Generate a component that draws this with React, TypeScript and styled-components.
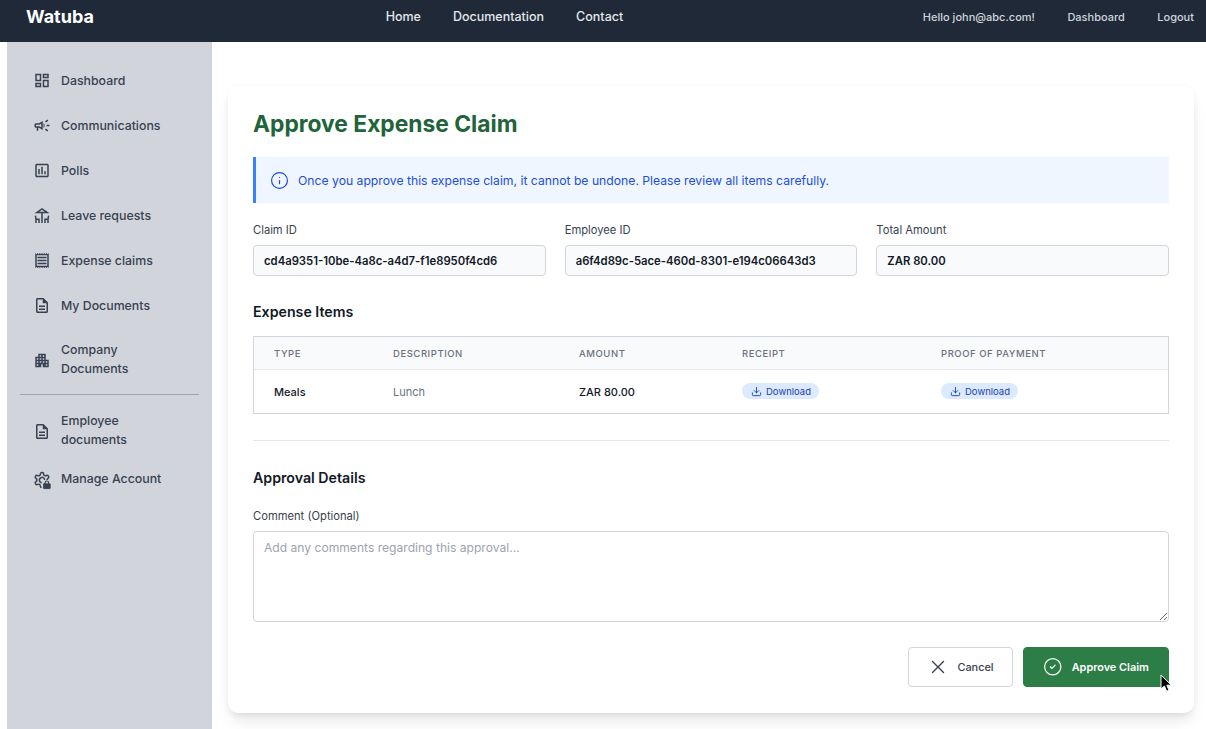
import React from "react";
import styled, { createGlobalStyle } from "styled-components";
import { CircleCheck, Download, Info, X } from "lucide-react";
import {
  MdOutlineApartment,
  MdOutlineCampaign,
  MdOutlineDashboard,
  MdOutlineDeck,
  MdOutlineDescription,
  MdOutlinePoll,
  MdOutlineReceipt,
} from "react-icons/md";

const GlobalStyle = createGlobalStyle`
  html, body {
    margin: 0;
    padding: 0;
    height: 100%;
    background: #fff;
    font-family: Inter, "Liberation Sans", sans-serif;
    color: #111827;
    overflow: hidden;
  }
  * { box-sizing: border-box; }
`;

const Page = styled.div`
  position: relative;
  width: 1206px;
  height: 729px;
  overflow: hidden;
`;

const TopBar = styled.header`
  height: 42px;
  background: #1f2937;
  display: flex;
  align-items: center;
  justify-content: space-between;
  padding: 0 12px 9px 26px;
`;

const Logo = styled.div`
  color: #fff;
  font-size: 18px;
  font-weight: 700;
  width: 69px;
`;

const MainNav = styled.nav`
  display: flex;
  gap: 32px;
  margin-left: -9px;
`;

const MainLink = styled.a`
  color: #e5e7eb;
  font-size: 12.5px;
  font-weight: 500;
`;

const UserNav = styled.nav`
  display: flex;
  gap: 32.5px;
`;

const UserLink = styled.a`
  color: #d1d5db;
  font-size: 11px;
  font-weight: 500;
`;

const Body = styled.div`
  display: flex;
  height: 687px;
  padding-left: 7px;
`;

const Sidebar = styled.aside`
  width: 205px;
  flex: none;
  background: #d1d5db;
  padding: 16.4px 13px 0;
`;

const SideItem = styled.a<{ $tight?: boolean }>`
  display: flex;
  align-items: center;
  gap: 10px;
  padding: ${(p) => (p.$tight ? "10px" : "13px")} 14px ${(p) => (p.$tight ? "10px" : "13px")} 13px;
  color: #374151;
  font-size: 12.35px;
  font-weight: 500;
  line-height: 18.7px;
`;

const SideIcon = styled.span`
  display: flex;
  width: 18px;
  justify-content: center;
  flex: none;
  font-size: 19px;
`;

const SideLabel = styled.span`
  max-width: 105px;
`;

const SideDivider = styled.hr`
  margin: 2.4px 0 7.2px;
  border: none;
  border-top: 1px solid #9ca3af;
`;

const Main = styled.main`
  flex: 1;
  padding: 44px 12px 16px 16px;
`;

const Card = styled.section`
  height: 627px;
  background: #fff;
  border-radius: 10px;
  box-shadow: 0 10px 15px -3px rgba(0, 0, 0, 0.1), 0 4px 6px -2px rgba(0, 0, 0, 0.05), 0 0 6px rgba(0, 0, 0, 0.03);
  padding: 22px 25px;
`;

const Title = styled.h1`
  margin: 0 0 18px;
  font-size: 22.8px;
  line-height: 31px;
  font-weight: 700;
  color: #22643a;
`;

const Notice = styled.div`
  height: 46px;
  display: flex;
  align-items: center;
  gap: 9.5px;
  padding-left: 13.5px;
  background: #eff6ff;
  border-left: 3px solid #3b82f6;
  color: #1d4ed8;
  font-size: 12.2px;
`;

const SummaryGrid = styled.div`
  display: grid;
  grid-template-columns: repeat(3, 1fr);
  gap: 19px;
  margin-top: 20px;
`;

const Field = styled.label`
  display: block;
`;

const FieldLabel = styled.span`
  display: block;
  font-size: 11.2px;
  line-height: 15px;
  font-weight: 400;
  color: #374151;
  margin-bottom: 7px;
`;

const ReadOnlyInput = styled.input`
  display: block;
  width: 100%;
  height: 31px;
  padding: 0 10px;
  background: #f9fafb;
  border: 1px solid #d1d5db;
  border-radius: 4px;
  font-family: inherit;
  font-size: 11.3px;
  font-weight: 600;
  color: #111827;
  outline: none;
`;

const SectionTitle = styled.h2`
  margin: 0;
  font-size: 14.2px;
  line-height: 20px;
  font-weight: 600;
  color: #111827;
`;

const ItemsTitle = styled(SectionTitle)`
  margin: 26px 0 14px;
`;

const ItemsTable = styled.div`
  border: 1px solid #d1d5db;
`;

const TableRow = styled.div<{ $head?: boolean }>`
  display: grid;
  grid-template-columns: 119px 186px 163px 199px 1fr;
  align-items: center;
  height: ${(p) => (p.$head ? "33px" : "43px")};
  padding-left: 20px;
  background: ${(p) => (p.$head ? "#f9fafb" : "#fff")};
  border-bottom: ${(p) => (p.$head ? "1px solid #e5e7eb" : "none")};
`;

const HeadCell = styled.div`
  font-size: 9.5px;
  font-weight: 500;
  letter-spacing: 0.55px;
  color: #6b7280;
  text-transform: uppercase;
`;

const Cell = styled.div<{ $muted?: boolean }>`
  font-size: 11px;
  font-weight: ${(p) => (p.$muted ? 400 : 500)};
  color: ${(p) => (p.$muted ? "#6b7280" : "#111827")};
`;

const DownloadChip = styled.a`
  display: inline-flex;
  align-items: center;
  gap: 4px;
  height: 16px;
  width: 77px;
  padding-left: 9px;
  border-radius: 8px;
  background: #dbeafe;
  color: #1e40af;
  font-size: 9.5px;
  font-weight: 400;
`;

const Rule = styled.hr`
  margin: 26px 0 0;
  border: none;
  border-top: 1px solid #e5e7eb;
`;

const ApprovalTitle = styled(SectionTitle)`
  margin: 27px 0 21px;
`;

const CommentBox = styled.textarea`
  display: block;
  width: 100%;
  height: 91px;
  padding: 8px 10px;
  border: 1px solid #d1d5db;
  border-radius: 4px;
  font-family: inherit;
  font-size: 12.1px;
  color: #111827;
  outline: none;
  &::placeholder {
    color: #9ca3af;
  }
`;

const Actions = styled.div`
  display: flex;
  justify-content: flex-end;
  gap: 10px;
  margin-top: 25px;
`;

const Button = styled.button<{ $primary?: boolean }>`
  display: flex;
  align-items: center;
  justify-content: center;
  height: 40px;
  width: ${(p) => (p.$primary ? "146px" : "105px")};
  gap: ${(p) => (p.$primary ? "9px" : "8px")};
  border-radius: 4px;
  border: 1px solid ${(p) => (p.$primary ? "#2d7d46" : "#d1d5db")};
  background: ${(p) => (p.$primary ? "#2d7d46" : "#fff")};
  color: ${(p) => (p.$primary ? "#fff" : "#374151")};
  font-family: inherit;
  font-size: 10.9px;
  font-weight: ${(p) => (p.$primary ? 600 : 500)};
`;

const Pointer = styled.svg`
  position: absolute;
  left: 1160px;
  top: 674px;
`;

// gear with a small padlock in the corner
const GearLock: React.FC = () => (
  <svg width="20" height="20" viewBox="0 0 24 24" fill="none" stroke="currentColor" strokeWidth="2" strokeLinejoin="round" strokeLinecap="round">
    <path d="M12.22 2h-.44a2 2 0 0 0-2 2v.18a2 2 0 0 1-1 1.73l-.43.25a2 2 0 0 1-2 0l-.15-.08a2 2 0 0 0-2.73.73l-.22.38a2 2 0 0 0 .73 2.73l.15.1a2 2 0 0 1 1 1.72v.51a2 2 0 0 1-1 1.74l-.15.09a2 2 0 0 0-.73 2.73l.22.38a2 2 0 0 0 2.73.73l.15-.08a2 2 0 0 1 2 0l.43.25a2 2 0 0 1 1 1.73V20a2 2 0 0 0 2 2h.44a2 2 0 0 0 2-2v-.18a2 2 0 0 1 1-1.73l.43-.25a2 2 0 0 1 2 0l.15.08a2 2 0 0 0 2.73-.73l.22-.39a2 2 0 0 0-.73-2.73l-.15-.08a2 2 0 0 1-1-1.74v-.5a2 2 0 0 1 1-1.74l.15-.09a2 2 0 0 0 .73-2.73l-.22-.38a2 2 0 0 0-2.73-.73l-.15.08a2 2 0 0 1-2 0l-.43-.25a2 2 0 0 1-1-1.73V4a2 2 0 0 0-2-2z" />
    <path d="M12 15.5a3.5 3.5 0 1 1 3.400-4.300" />
    <rect x="11.500" y="12" width="13" height="12" fill="#d1d5db" stroke="none" />
    <rect x="14" y="17" width="9" height="6.500" rx="0.800" fill="currentColor" strokeWidth="1" />
    <path d="M16.200 17v-1.400a2.300 2.300 0 0 1 4.600 0V17" strokeWidth="1.600" />
  </svg>
);

const navTop = [
  { label: "Dashboard", icon: <MdOutlineDashboard /> },
  { label: "Communications", icon: <MdOutlineCampaign /> },
  { label: "Polls", icon: <MdOutlinePoll /> },
  { label: "Leave requests", icon: <MdOutlineDeck /> },
  { label: "Expense claims", icon: <MdOutlineReceipt /> },
  { label: "My Documents", icon: <MdOutlineDescription /> },
  { label: "Company Documents", icon: <MdOutlineApartment /> },
];

const navBottom = [
  { label: "Employee documents", icon: <MdOutlineDescription /> },
  { label: "Manage Account", icon: <GearLock /> },
];

const DownloadLink: React.FC = () => (
  <DownloadChip>
    <Download size={11} strokeWidth={2} />
    Download
  </DownloadChip>
);

const App: React.FC = () => {
  return (
    <Page>
      <GlobalStyle />
      <TopBar>
        <Logo>Watuba</Logo>
        <MainNav>
          <MainLink>Home</MainLink>
          <MainLink>Documentation</MainLink>
          <MainLink>Contact</MainLink>
        </MainNav>
        <UserNav>
          <UserLink>Hello john@abc.com!</UserLink>
          <UserLink>Dashboard</UserLink>
          <UserLink>Logout</UserLink>
        </UserNav>
      </TopBar>
      <Body>
        <Sidebar>
          {navTop.map((item) => (
            <SideItem key={item.label}>
              <SideIcon>{item.icon}</SideIcon>
              <SideLabel>{item.label}</SideLabel>
            </SideItem>
          ))}
          <SideDivider />
          {navBottom.map((item) => (
            <SideItem $tight key={item.label}>
              <SideIcon>{item.icon}</SideIcon>
              <SideLabel>{item.label}</SideLabel>
            </SideItem>
          ))}
        </Sidebar>
        <Main>
          <Card>
            <Title>Approve Expense Claim</Title>
            <Notice>
              <Info size={19} strokeWidth={1.5} />
              Once you approve this expense claim, it cannot be undone. Please review all items carefully.
            </Notice>
            <SummaryGrid>
              <Field>
                <FieldLabel>Claim ID</FieldLabel>
                <ReadOnlyInput readOnly value="cd4a9351-10be-4a8c-a4d7-f1e8950f4cd6" />
              </Field>
              <Field>
                <FieldLabel>Employee ID</FieldLabel>
                <ReadOnlyInput readOnly value="a6f4d89c-5ace-460d-8301-e194c06643d3" />
              </Field>
              <Field>
                <FieldLabel>Total Amount</FieldLabel>
                <ReadOnlyInput readOnly value="ZAR 80.00" />
              </Field>
            </SummaryGrid>
            <ItemsTitle>Expense Items</ItemsTitle>
            <ItemsTable>
              <TableRow $head>
                <HeadCell>Type</HeadCell>
                <HeadCell>Description</HeadCell>
                <HeadCell>Amount</HeadCell>
                <HeadCell>Receipt</HeadCell>
                <HeadCell>Proof of Payment</HeadCell>
              </TableRow>
              <TableRow>
                <Cell>Meals</Cell>
                <Cell $muted>Lunch</Cell>
                <Cell>ZAR 80.00</Cell>
                <Cell><DownloadLink /></Cell>
                <Cell><DownloadLink /></Cell>
              </TableRow>
            </ItemsTable>
            <Rule />
            <ApprovalTitle>Approval Details</ApprovalTitle>
            <Field>
              <FieldLabel>Comment (Optional)</FieldLabel>
              <CommentBox placeholder="Add any comments regarding this approval..." />
            </Field>
            <Actions>
              <Button>
                <X size={22} strokeWidth={1.5} />
                Cancel
              </Button>
              <Button $primary>
                <CircleCheck size={19.5} strokeWidth={1.5} />
                Approve Claim
              </Button>
            </Actions>
          </Card>
        </Main>
      </Body>
      <Pointer width="13" height="19" viewBox="0 0 13 19">
        <path d="M1 1v14l3.4-3 2.2 5.200 2.400-1-2.200-5h4.600z" fill="#000" stroke="#fff" strokeWidth="1" />
      </Pointer>
    </Page>
  );
};

export default App;
